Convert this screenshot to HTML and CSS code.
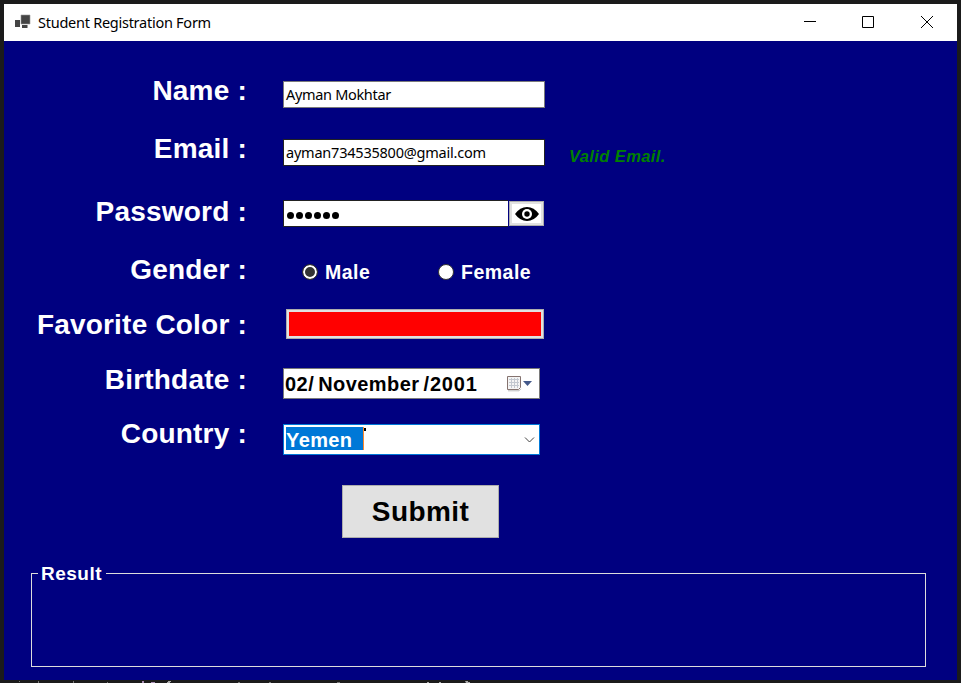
FILE: index.html
```html
<!DOCTYPE html>
<html lang="en">
<head>
<meta charset="utf-8">
<title>Student Registration Form</title>
<link rel="stylesheet" href="styles.css">
</head>
<body>
<div class="window">
  <header class="titlebar">
    <svg class="app-icon" width="18" height="18" viewBox="0 0 18 18"><path d="M1 6h5v7H1z" fill="#444"/><path d="M7 1h9v9H7z" fill="#444" stroke="#999" stroke-width=".6"/><path d="M8 11h5.500v3H8z" fill="#444"/></svg>
    <span class="title">Student Registration Form</span>
    <div class="controls">
      <svg width="14" height="14" viewBox="0 0 14 14"><path d="M1 6.500h12" /></svg>
      <svg width="14" height="14" viewBox="0 0 14 14"><path d="M1.500 1.500h11v11h-11z"/></svg>
      <svg width="14" height="14" viewBox="0 0 14 14"><path d="M1 1l12 12M13 1L1 13"/></svg>
    </div>
  </header>
  <main class="form">
    <div class="row name"><span class="label">Name :</span><div class="text-input muted">Ayman Mokhtar</div></div>
    <div class="row email"><span class="label">Email :</span><div class="text-input address">ayman734535800@gmail.com</div><span class="valid">Valid Email.</span></div>
    <div class="row password"><span class="label">Password :</span><div class="text-input secret"><i></i><i></i><i></i><i></i><i></i><i></i></div><div class="eye"><svg width="24" height="16" viewBox="0 0 24 16"><path d="M0 8Q5 1 12 1T24 8Q19 15 12 15T0 8Z"/><circle cx="12" cy="8" r="5" fill="#fff"/><circle cx="12" cy="8" r="2.700"/></svg></div></div>
    <div class="row gender"><span class="label">Gender :</span><div class="radio male"><b class="dot on"></b>Male</div><div class="radio"><b class="dot"></b>Female</div></div>
    <div class="row color"><span class="label">Favorite Color :</span><div class="swatch"></div></div>
    <div class="row birth"><span class="label">Birthdate :</span><div class="picker"><span class="day">02/</span><span class="month">November</span><span class="year">/2001</span>
      <svg class="calendar" width="26" height="18" viewBox="0 0 26 18"><path d="M.5 1.500h13v11l-2 2H.5z" fill="#f4f4f4" stroke="#85736f"/><path d="M2 4.500h10M2 7.500h10M2 10.500h10M4.500 3v10M7.500 3v10M10.500 3v10" stroke="#c3c8d0"/><path d="M1 15.800h11l2-2" stroke="#bbb" fill="none"/><path d="M16 6h9l-4.500 5z" fill="#44598a"/></svg></div></div>
    <div class="row country"><span class="label">Country :</span><div class="combo"><span class="selection">Yemen</span><i class="caret-mark"></i><svg class="chevron" width="11" height="8" viewBox="0 0 11 8"><path d="M1 1.500l4.500 4.500L10 1.500" fill="none" stroke="#444"/></svg></div></div>
    <div class="submit">Submit</div>
    <fieldset class="result"><legend>Result</legend></fieldset>
  </main>
</div>
<svg class="backdrop" width="961" height="2" viewBox="0 0 961 2"><path d="M19 0h1v1h-1zM38 0h1v2h-1zM73 0h1v2h-1zM107 1h1v1h-1zM238 1h2v1h-2zM269 1h2v1h-2zM337 1h3v1h-3z" fill="#777"/><path d="M142 0h2v2h-2zM151 1h4v1h-4z" fill="#a58ab0"/><path d="M168 0h3v1h-1v1h-3v-1h1zM427 1h2v1h-2zM439 1h2v1h-2zM465 0h3v1h2v1h-4z" fill="#aaa"/></svg>
</body>
</html>
```
FILE: styles.css
```css
* { box-sizing: border-box; }
body { margin: 0; width: 961px; height: 683px; overflow: hidden; background: #1b1b1b; font-family: "Liberation Sans", Arial, sans-serif; display: flex; flex-direction: column; }
.window { margin: 4px 0 0 4px; width: 953px; height: 676px; background: #000080; flex: none; }
.backdrop { margin-top: 1px; display: block; flex: none; }
.titlebar { height: 37px; background: #fff; display: flex; align-items: center; padding-left: 10px; }
.app-icon { margin-right: 6px; margin-top: 1px; }
.title { font: 14.5px "Noto Sans", sans-serif; letter-spacing: -0.26px; color: #000; margin-top: -1px; }
.controls { margin-left: auto; margin-right: 23px; display: flex; gap: 44px; }
.controls svg { fill: none; stroke: #000; stroke-width: 1; }
.controls svg:nth-child(-n+2) { margin-left: -1px; margin-right: 1px; }
.controls svg { margin-top: -1px; }
.form { padding-top: 33px; color: #fff; font-weight: bold; }
.row { display: flex; align-items: flex-start; height: 55px; }
.label { width: 243px; margin-right: 36px; font-size: 28px; line-height: 34px; letter-spacing: 0.2px; text-align: right; white-space: nowrap; flex: none; }
.name { height: 58px; }
.email { height: 63px; }
.password { height: 58px; }
.country { height: 63px; }
.country .label { margin-top: -1px; }
.text-input { margin-top: 7px; width: 262px; height: 27px; border: 1px solid #222; background: #fff; color: #000; font: 14.5px/25px "Noto Sans", sans-serif; letter-spacing: -0.32px; padding-left: 2px; white-space: nowrap; }
.address { letter-spacing: -0.22px; }
.muted { border-color: #7a7a7a; }
.valid { margin: 14px 0 0 24px; color: #008000; font-size: 16.5px; line-height: 21px; letter-spacing: 0.4px; font-style: italic; }
.secret { margin-top: 5px; width: 225px; display: flex; align-items: center; gap: 2px; padding: 3px 0 0 3px; border-right: 0; }
.secret i { width: 7px; height: 7px; border-radius: 50%; background: #000; }
.eye { margin: 6px 0 0 1px; width: 35px; height: 25px; border: 1px solid #adadad; background: #fff; box-shadow: inset 0 0 0 2px #e1e1e1; display: flex; align-items: center; justify-content: center; }
.radio { display: flex; align-items: center; font-size: 19.5px; line-height: 22px; letter-spacing: 0.5px; margin-top: 8px; }
.male { margin-left: 19px; width: 136px; }
.dot { width: 16px; height: 16px; border-radius: 50%; background: #fff; border: 1px solid #333; margin: -1px 7px 0 0; }
.on { background: #333; box-shadow: inset 0 0 0 2px #fff; }
.swatch { margin: 1px 0 0 3px; width: 258px; height: 30px; background: #f00; border: 1px solid #adadad; box-shadow: inset 0 0 0 2px #e1e1e1; }
.picker { margin-top: 5px; width: 257px; height: 31px; border: 1px solid #7a7a7a; background: #fff; color: #000; display: flex; align-items: center; padding: 2px 0 0 1px; font-size: 20px; letter-spacing: 0.45px; }
.month { margin-left: 4px; }
.year { margin-left: 4px; letter-spacing: 0.8px; }
.calendar { margin: -2px 6px 0 auto; }
.combo { margin-top: 6px; width: 257px; height: 31px; border: 1px solid #0078d7; background: #fff; display: flex; align-items: center; padding-left: 2px; font-size: 20px; }
.selection { width: 78px; height: 23px; line-height: 26px; letter-spacing: 0.4px; margin-top: -2px; background: #0078d7; border-right: 1px solid #ff8728; }
.caret-mark { width: 2px; height: 3px; background: #000; align-self: flex-start; margin-top: 3px; }
.chevron { margin-left: auto; margin-right: 4px; }
.submit { margin: 4px 0 0 338px; width: 157px; height: 53px; border: 1px solid #adadad; background: #e1e1e1; color: #000; font-size: 28px; line-height: 51px; letter-spacing: 0.4px; text-align: center; }
.result { margin: 24px 0 0 27px; width: 895px; height: 105px; border: 1px solid #dcdcdc; padding: 0; min-width: 0; }
.result legend { margin-left: 6px; padding: 1px 4px 0 3px; font-size: 19px; line-height: 22px; letter-spacing: 0.5px; }
```
